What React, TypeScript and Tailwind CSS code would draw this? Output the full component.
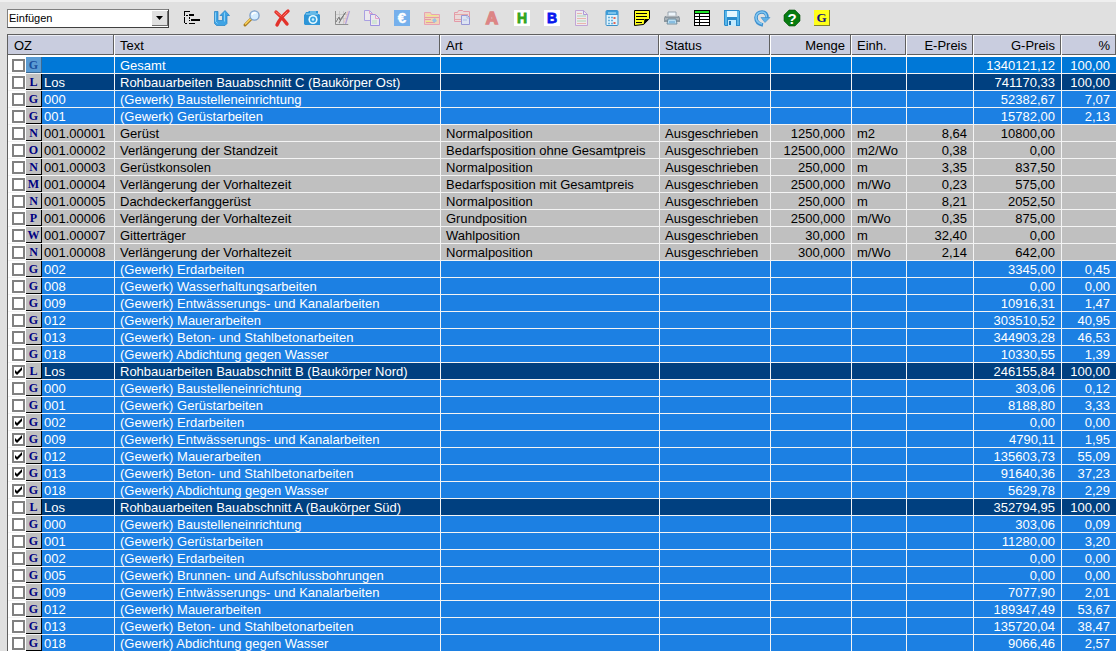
import React, { useState } from "react";

type Kind = "total" | "lot" | "trade" | "item";

interface Row {
  kind: Kind;
  badge: string;
  oz: string;
  text: string;
  art?: string;
  menge?: string;
  einh?: string;
  ep?: string;
  gp: string;
  pct?: string;
  checked?: boolean;
}

const lot = (text: string, gp: string, checked = false): Row => ({
  kind: "lot", badge: "L", oz: "Los", text: `Rohbauarbeiten Bauabschnitt ${text}`, gp, pct: "100,00", checked,
});
const trade = (oz: string, text: string, gp: string, pct: string, checked = false): Row => ({
  kind: "trade", badge: "G", oz, text: `(Gewerk) ${text}`, gp, pct, checked,
});
const item = (badge: string, oz: string, text: string, art: string, menge: string, einh: string, ep: string, gp: string): Row => ({
  kind: "item", badge, oz: `001.${oz}`, text, art, menge, einh, ep, gp,
});

const rows: Row[] = [
  { kind: "total", badge: "G", oz: "", text: "Gesamt", gp: "1340121,12", pct: "100,00" },
  lot("C (Baukörper Ost)", "741170,33"),
  trade("000", "Baustelleneinrichtung", "52382,67", "7,07"),
  trade("001", "Gerüstarbeiten", "15782,00", "2,13"),
  item("N", "00001", "Gerüst", "Normalposition", "1250,000", "m2", "8,64", "10800,00"),
  item("O", "00002", "Verlängerung der Standzeit", "Bedarfsposition ohne Gesamtpreis", "12500,000", "m2/Wo", "0,38", "0,00"),
  item("N", "00003", "Gerüstkonsolen", "Normalposition", "250,000", "m", "3,35", "837,50"),
  item("M", "00004", "Verlängerung der Vorhaltezeit", "Bedarfsposition mit Gesamtpreis", "2500,000", "m/Wo", "0,23", "575,00"),
  item("N", "00005", "Dachdeckerfanggerüst", "Normalposition", "250,000", "m", "8,21", "2052,50"),
  item("P", "00006", "Verlängerung der Vorhaltezeit", "Grundposition", "2500,000", "m/Wo", "0,35", "875,00"),
  item("W", "00007", "Gitterträger", "Wahlposition", "30,000", "m", "32,40", "0,00"),
  item("N", "00008", "Verlängerung der Vorhaltezeit", "Normalposition", "300,000", "m/Wo", "2,14", "642,00"),
  trade("002", "Erdarbeiten", "3345,00", "0,45"),
  trade("008", "Wasserhaltungsarbeiten", "0,00", "0,00"),
  trade("009", "Entwässerungs- und Kanalarbeiten", "10916,31", "1,47"),
  trade("012", "Mauerarbeiten", "303510,52", "40,95"),
  trade("013", "Beton- und Stahlbetonarbeiten", "344903,28", "46,53"),
  trade("018", "Abdichtung gegen Wasser", "10330,55", "1,39"),
  lot("B (Baukörper Nord)", "246155,84", true),
  trade("000", "Baustelleneinrichtung", "303,06", "0,12"),
  trade("001", "Gerüstarbeiten", "8188,80", "3,33"),
  trade("002", "Erdarbeiten", "0,00", "0,00", true),
  trade("009", "Entwässerungs- und Kanalarbeiten", "4790,11", "1,95", true),
  trade("012", "Mauerarbeiten", "135603,73", "55,09", true),
  trade("013", "Beton- und Stahlbetonarbeiten", "91640,36", "37,23", true),
  trade("018", "Abdichtung gegen Wasser", "5629,78", "2,29", true),
  lot("A (Baukörper Süd)", "352794,95"),
  trade("000", "Baustelleneinrichtung", "303,06", "0,09"),
  trade("001", "Gerüstarbeiten", "11280,00", "3,20"),
  trade("002", "Erdarbeiten", "0,00", "0,00"),
  trade("005", "Brunnen- und Aufschlussbohrungen", "0,00", "0,00"),
  trade("009", "Entwässerungs- und Kanalarbeiten", "7077,90", "2,01"),
  trade("012", "Mauerarbeiten", "189347,49", "53,67"),
  trade("013", "Beton- und Stahlbetonarbeiten", "135720,04", "38,47"),
  trade("018", "Abdichtung gegen Wasser", "9066,46", "2,57"),
];

const rowStyle: Record<Kind, string> = {
  total: "bg-[#0078d7] text-white",
  lot: "bg-[#004080] text-white",
  trade: "bg-[#1c80e3] text-white",
  item: "bg-[#c0c0c0] text-black",
};

const columns = [
  { label: "OZ", width: "w-[107px]" },
  { label: "Text", width: "w-[326px]" },
  { label: "Art", width: "w-[219px]" },
  { label: "Status", width: "w-[111px]" },
  { label: "Menge", width: "w-[81px]", right: true },
  { label: "Einh.", width: "w-[55px]" },
  { label: "E-Preis", width: "w-[67px]", right: true },
  { label: "G-Preis", width: "w-[88px]", right: true },
  { label: "%", width: "w-auto", right: true },
];

const serif = "Liberation Serif, serif";
const sans = "Liberation Sans, sans-serif";

const tools: { name: string; art: React.ReactNode }[] = [
  {
    name: "Gliederung",
    art: (
      <g fill="#000" shapeRendering="crispEdges">
        <path d="M0 1h6v1H0zM0 1h1v5H0zM0 7h1v6H0zM2 5h2v1H2zM5 4h5v2H5zM5 7h1v2H5zM7 9h9v2H7zM5 10h1v1H5zM1 13h2v1H1zM5 13h6v1H5z" />
      </g>
    ),
  },
  {
    name: "Übernehmen",
    art: (
      <>
        <path d="M.5 1.500h3.500v9h4.500V5.500H6l5-5 4.500 5H13v8l-2 2H2.500l-2-2z" fill="#3fa3e4" stroke="#1f80c6" strokeWidth=".7" />
        <path d="M1.500 2.500v9l2 2M10.500 2.500v9" fill="none" stroke="#86d0f6" />
      </>
    ),
  },
  {
    name: "Suchen",
    art: (
      <>
        <path d="m1 15 6-6" stroke="#a77a1c" strokeWidth="3" strokeLinecap="round" />
        <path d="m1.500 14 5-5" stroke="#ffd45c" strokeWidth="1.400" strokeLinecap="round" />
        <circle cx="10.500" cy="5.500" r="4.600" fill="#d5edff" stroke="#7c9fc9" strokeWidth="1.300" />
        <path d="M8 5q1-3 4-2" stroke="#fff" fill="none" strokeWidth="1.500" />
      </>
    ),
  },
  {
    name: "Löschen",
    art: (
      <>
        <path d="M2 2q6 5 11 12M14 1Q6 8 3 15" fill="none" stroke="#e2322b" strokeWidth="3.400" strokeLinecap="round" />
        <path d="M2 2l5 4M13 2 9 6" fill="none" stroke="#ff7468" strokeLinecap="round" />
      </>
    ),
  },
  {
    name: "Kamera",
    art: (
      <>
        <path d="M1 4 2 2h2l1-1h9v3h1l1 1v10H1L0 14V5z" fill="#2e95d7" />
        <path d="M2 4h12M6 2h6" stroke="#9bddf7" strokeWidth="1.200" />
        <circle cx="9" cy="9.500" r="4.600" fill="#e8faff" />
        <circle cx="9" cy="9.500" r="3" fill="#38a3df" />
        <circle cx="9" cy="9.500" r="1.300" fill="#c9efff" />
      </>
    ),
  },
  {
    name: "Diagramm",
    art: (
      <>
        <path d="M1.500 1v13.500H15M2 4.500h12M2 8.500h12M5.500 1v13M9.500 1v13" fill="none" stroke="#c2c2c2" strokeWidth=".7" />
        <path d="M1.500 1v13.500H14" fill="none" stroke="#8f8f8f" />
        <path d="M2 12 5 7l1 3 6-8M5 13l6-10" fill="none" stroke="#7a7a7a" />
        <path d="m15.500 1-4 13" stroke="#b3a0da" strokeWidth="1.300" />
        <path d="m14 1-4 12" stroke="#efb4b4" strokeWidth=".7" />
      </>
    ),
  },
  {
    name: "Kopieren",
    art: (
      <g fill="#ebe8ed" strokeWidth="1">
        <path d="M.5.500h5l3 3v7h-8z" stroke="#aaa0e2" />
        <path d="M6.500 4.500h5l4 4v7h-9z" stroke="#9d93e0" />
        <path d="M5.500.500v3h3M11.500 4.500v4h4" fill="none" stroke="#e4a0c8" />
        <path d="M8 11h5M8 13h5" stroke="#b9e1bd" />
      </g>
    ),
  },
  {
    name: "Euro",
    art: (
      <>
        <path d="M0 0h16v16H0z" fill="#76b0ec" />
        <text x="8" y="13" fontFamily={sans} fontSize="15" fontWeight="700" fill="#fff" stroke="#fff" strokeWidth=".4" textAnchor="middle">€</text>
      </>
    ),
  },
  {
    name: "Ordner",
    art: (
      <>
        <path d="M.5 2.500h6l1 2h8v10H.5z" fill="#efd5b5" stroke="#e8a2b4" />
        <path d="M1 7.500h14M1 9.500h6M2 12.500h9" stroke="#e69ca3" />
        <path d="M3 5.500h10M2 11.500h4" stroke="#eee985" />
        <path d="m8 10 3-2 2 3-3 2z" fill="#9cc4e1" />
      </>
    ),
  },
  {
    name: "Ordner kopieren",
    art: (
      <>
        <path d="M.5 11.500v-9h3l1-2h4l1 1h6v10z" fill="#ead9d9" stroke="#e49aa8" />
        <path d="M1 4.500h13M1 9.500h6" stroke="#e5a6a6" />
        <path d="M7.500 5.500h6l2 2v7h-8z" fill="#dce3f2" stroke="#9797d5" />
        <path d="M13 6v2h2M9 10h4" stroke="#a9bce5" fill="none" />
      </>
    ),
  },
  {
    name: "A",
    art: <text x="8" y="14" fontFamily={sans} fontSize="17" fontWeight="700" fill="#dc8585" stroke="#dc8585" strokeWidth="1.500" textAnchor="middle">A</text>,
  },
  {
    name: "H",
    art: (
      <>
        <path d="M0 0h16v16H0z" fill="#fff" />
        <text x="8" y="13" fontFamily={sans} fontSize="14" fontWeight="700" fill="#35a51d" stroke="#35a51d" strokeWidth=".8" textAnchor="middle">H</text>
      </>
    ),
  },
  {
    name: "B",
    art: (
      <>
        <path d="M0 0h16v16H0z" fill="#fff" />
        <text x="8" y="13" fontFamily={sans} fontSize="14" fontWeight="700" fill="#0717ee" stroke="#0717ee" strokeWidth=".8" textAnchor="middle">B</text>
      </>
    ),
  },
  {
    name: "Dokument",
    art: (
      <>
        <path d="M1.500.500h8l4 4v11h-12z" fill="#edeaed" stroke="#c1a5d5" />
        <path d="M9.500.500v4h4" fill="none" stroke="#ad9bd9" />
        <path d="M3 3.500h5M3 8.500h9M3 13.500h9" stroke="#e9b6ab" />
        <path d="M3 6h9M3 11h9" stroke="#a9d6b4" />
      </>
    ),
  },
  {
    name: "Rechner",
    art: (
      <>
        <rect x="2" y=".5" width="12" height="15" rx="1" fill="#dff3fd" stroke="#3c91c9" />
        <path d="M2 1h12v4H2z" fill="#3c9cd8" />
        <path d="M4 3h8" stroke="#bde9fc" />
        <path d="M4 7.500h5M4 10.500h5M4 13.500h5" stroke="#69afd9" strokeWidth="1.500" strokeDasharray="2 1" />
        <path d="M10.500 7v2M10.500 12v2" stroke="#e56552" strokeWidth="2" />
      </>
    ),
  },
  {
    name: "Notiz",
    art: (
      <>
        <path d="M.5.500h15v8l-6 6-9 1z" fill="#ffff20" stroke="#000" />
        <path d="M2 3.500h11M2 6.500h11M2 9.500h8M2 12.500h6" stroke="#000" />
        <path d="M15.500 9h-5l-1 6z" fill="#000" />
      </>
    ),
  },
  {
    name: "Drucken",
    art: (
      <>
        <path d="M4 2h8v5H4z" fill="#edf5fb" stroke="#87939f" strokeWidth=".8" />
        <path d="M1 6h14l1 2v4H0V8z" fill="#8c979f" />
        <path d="M2 6h12M1 9h14" stroke="#c9ced2" />
        <path d="M4 9h8l1 5H3z" fill="#b9def2" stroke="#607d91" strokeWidth=".8" />
        <path d="M5 12h6" stroke="#559bd0" />
      </>
    ),
  },
  {
    name: "Tabelle",
    art: (
      <g shapeRendering="crispEdges">
        <path d="M0 0h16v16H0z" fill="#000" />
        <path d="M1 1h14v2H1z" fill="#20e32c" />
        <path d="M1 4h4v2H1zM6 4h9v2H6zM1 7h4v2H1zM6 7h9v2H6zM1 10h4v2H1zM6 10h9v2H6zM1 13h4v2H1zM6 13h9v2H6z" fill="#fff" />
      </g>
    ),
  },
  {
    name: "Speichern",
    art: (
      <>
        <path d="M0 0h15l1 1v15H1l-1-1z" fill="#288bcc" />
        <path d="M1 1h2v14H1zM13 1h2v14h-2z" fill="#57b5e9" />
        <path d="M3 1h10v6H3z" fill="#e3f6ff" />
        <path d="M4 10h8v6H4z" fill="#c3eafd" />
        <path d="M5 11h2v4H5z" fill="#2275b3" />
      </>
    ),
  },
  {
    name: "Aktualisieren",
    art: (
      <>
        <path d="M9 15C4 14 2 11 2 7.500 2 4 5 2 8 2c3 0 5 2 5 6" fill="none" stroke="#3d8fce" strokeWidth="3.600" />
        <path d="M8 14C4 13 2 10 2 7.500 2 4 5 2 8 2c3 0 4.500 2 4.500 6" fill="none" stroke="#83c8f2" strokeWidth="1.600" />
        <path d="M7 7.500h9L11 12.500z" fill="#5fb2e8" stroke="#3c88c4" strokeWidth=".6" />
      </>
    ),
  },
  {
    name: "Hilfe",
    art: (
      <>
        <path d="M5 0h6l5 5v6l-5 5H5l-5-5V5z" fill="#087b10" stroke="#044f08" strokeWidth=".6" />
        <text x="8" y="13.500" fontFamily={sans} fontSize="15" fontWeight="700" fill="#fff" textAnchor="middle">?</text>
      </>
    ),
  },
  {
    name: "G",
    art: (
      <>
        <path d="M0 0h16v16H0z" fill="#85852a" />
        <path d="M0 0h15v15H0z" fill="#ffff19" />
        <text x="7.500" y="12" fontFamily={serif} fontSize="13" fontWeight="700" fill="#101080" textAnchor="middle">G</text>
      </>
    ),
  },
];

function Toolbar() {
  return (
    <div className="flex h-[34px] shrink-0 items-center gap-[15px] border-t-2 border-[#efefef] pl-[7px]">
      <div className="grid h-[19px] w-[162px] shrink-0 items-center border border-t-[#808080] border-r-[#404040] border-b-[#404040] border-l-[#808080] bg-white">
        <select
          aria-label="Aktion"
          className="col-start-1 row-start-1 h-[17px] w-full appearance-none bg-transparent pl-px font-['Liberation_Sans',Arial,sans-serif] text-[11px] leading-[15px] text-black outline-none"
        >
          <option>Einfügen</option>
        </select>
        <span className="pointer-events-none col-start-1 row-start-1 flex h-[15px] w-[16px] items-center justify-center justify-self-end border-r border-b border-[#707070] bg-[#e0e0e0]">
          <svg width="7" height="4" viewBox="0 0 7 4" aria-hidden="true">
            <path d="M0 0h7L3.500 4z" />
          </svg>
        </span>
      </div>
      <div className="flex gap-[14px]">
        {tools.map((t) => (
          <button key={t.name} type="button" aria-label={t.name} className="size-4 shrink-0">
            <svg width="16" height="16" viewBox="0 0 16 16" overflow="visible" aria-hidden="true">{t.art}</svg>
          </button>
        ))}
      </div>
    </div>
  );
}

const cell = "h-[17px] overflow-hidden border-r border-b border-[#f4f4f4] p-0 pt-px pl-[5px] leading-[15px] whitespace-nowrap";
const num = "h-[17px] overflow-hidden border-r border-b border-[#f4f4f4] p-0 pt-px pr-[6px] text-right leading-[15px] whitespace-nowrap last:border-r-0";

function TableRow({ row }: { row: Row }) {
  const [checked, setChecked] = useState(!!row.checked);
  const badge =
    row.kind === "total" ? "bg-[#5a9bd3] text-[#1a4f9c] border-[#3a6a94]" : "bg-[#c0c0c0] text-[#000080] border-black";
  return (
    <tr className={rowStyle[row.kind]}>
      <td className="h-[17px] border-r border-b border-[#f4f4f4] p-0">
        <div className="flex h-4 items-start">
          <label className="flex h-4 w-[18px] shrink-0 items-start bg-white pt-[2px] pl-1">
            <input
              type="checkbox"
              aria-label={`${row.oz} ${row.text}`}
              checked={checked}
              onChange={(e) => setChecked(e.target.checked)}
              className="peer size-[13px] shrink-0 appearance-none border-2 border-[#808080] bg-white"
            />
            <svg className="pointer-events-none invisible mt-[2px] -ml-[11px] size-[9px] shrink-0 peer-checked:visible" viewBox="0 0 9 9" aria-hidden="true">
              <path d="M1 3v3l2 2 5-5V0L3 5z" fill="#000" />
            </svg>
          </label>
          <span className={`flex h-4 w-4 shrink-0 items-center justify-center border-r border-b font-['Liberation_Serif',serif] text-[12px] leading-none font-bold ${badge}`}>
            {row.badge}
          </span>
          <span className="pt-px pl-[2px] leading-[15px] whitespace-nowrap">{row.oz}</span>
        </div>
      </td>
      <td className={cell}>{row.text}</td>
      <td className={cell}>{row.art}</td>
      <td className={cell}>{row.kind === "item" ? "Ausgeschrieben" : ""}</td>
      <td className={num}>{row.menge}</td>
      <td className={cell}>{row.einh}</td>
      <td className={num}>{row.ep}</td>
      <td className={num}>{row.gp}</td>
      <td className={num}>{row.pct}</td>
    </tr>
  );
}

export default function App() {
  return (
    <div className="flex h-screen flex-col overflow-hidden bg-[#e0e0e0] font-['Liberation_Sans',Arial,sans-serif] text-[13px] leading-4 text-black">
      <Toolbar />
      <main className="ml-[7px] min-h-0 flex-1 overflow-hidden border-t border-l border-[#606060] bg-white">
        <table className="w-full table-fixed border-separate border-spacing-0">
          <colgroup>
            {columns.map((c) => (
              <col key={c.label} className={c.width} />
            ))}
          </colgroup>
          <thead>
            <tr>
              {columns.map((c) => (
                <th
                  key={c.label}
                  scope="col"
                  className={`h-[22px] border-r border-b-2 border-white bg-[#c9cddf] p-0 pt-px font-normal shadow-[inset_-1px_-1px_0_#606060,inset_0_1px_0_#eceef6] last:border-r-0 ${c.right ? "pr-[6px] text-right" : "pl-[5px] text-left first:pl-[6px]"}`}
                >
                  {c.label}
                </th>
              ))}
            </tr>
          </thead>
          <tbody>
            {rows.map((r, i) => (
              <TableRow key={i} row={r} />
            ))}
          </tbody>
        </table>
      </main>
    </div>
  );
}
